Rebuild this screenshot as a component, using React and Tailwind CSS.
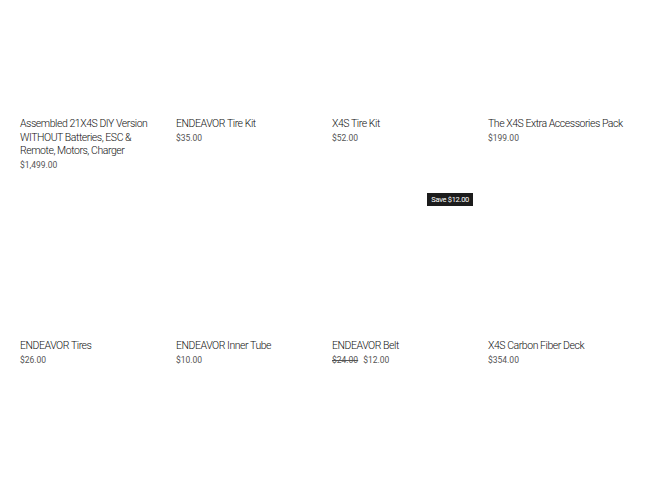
import React from "react";

const products = [
  { title: "Assembled 21X4S DIY Version WITHOUT Batteries, ESC & Remote, Motors, Charger", price: "$1,499.00" },
  { title: "ENDEAVOR Tire Kit", price: "$35.00" },
  { title: "X4S Tire Kit", price: "$52.00" },
  { title: "The X4S Extra Accessories Pack", price: "$199.00" },
  { title: "ENDEAVOR Tires", price: "$26.00" },
  { title: "ENDEAVOR Inner Tube", price: "$10.00" },
  { title: "ENDEAVOR Belt", price: "$12.00", compareAt: "$24.00", badge: "Save $12.00" },
  { title: "X4S Carbon Fiber Deck", price: "$354.00" },
];

function ProductCard({ product }) {
  return (
    <div>
      <div className="relative h-[141px] bg-white">
        {product.badge && (
          <span className="absolute top-[3px] right-0 bg-[#1c1c1c] text-white text-[7.5px] leading-[13px] tracking-[-0.3px] px-[4px]">
            {product.badge}
          </span>
        )}
      </div>
      <p className="mt-[8px] text-[10.5px] leading-[13.5px] font-light tracking-[-0.45px] text-[#111]">{product.title}</p>
      <p className="mt-[1.5px] text-[8.5px] leading-[12px] text-[#555]">
        {product.compareAt && <s className="mr-[5px]">{product.compareAt}</s>}
        {product.price}
      </p>
    </div>
  );
}

export default function App() {
  return (
    <div className="w-[670px] h-[500px] overflow-hidden bg-white" style={{ fontFamily: "Roboto, 'Liberation Sans', sans-serif" }}>
      <div className="-mt-[32px] px-[20px] grid grid-cols-[repeat(4,141px)] gap-x-[15px] gap-y-[19px]">
        {products.map((p) => (
          <ProductCard key={p.title} product={p} />
        ))}
      </div>
    </div>
  );
}
